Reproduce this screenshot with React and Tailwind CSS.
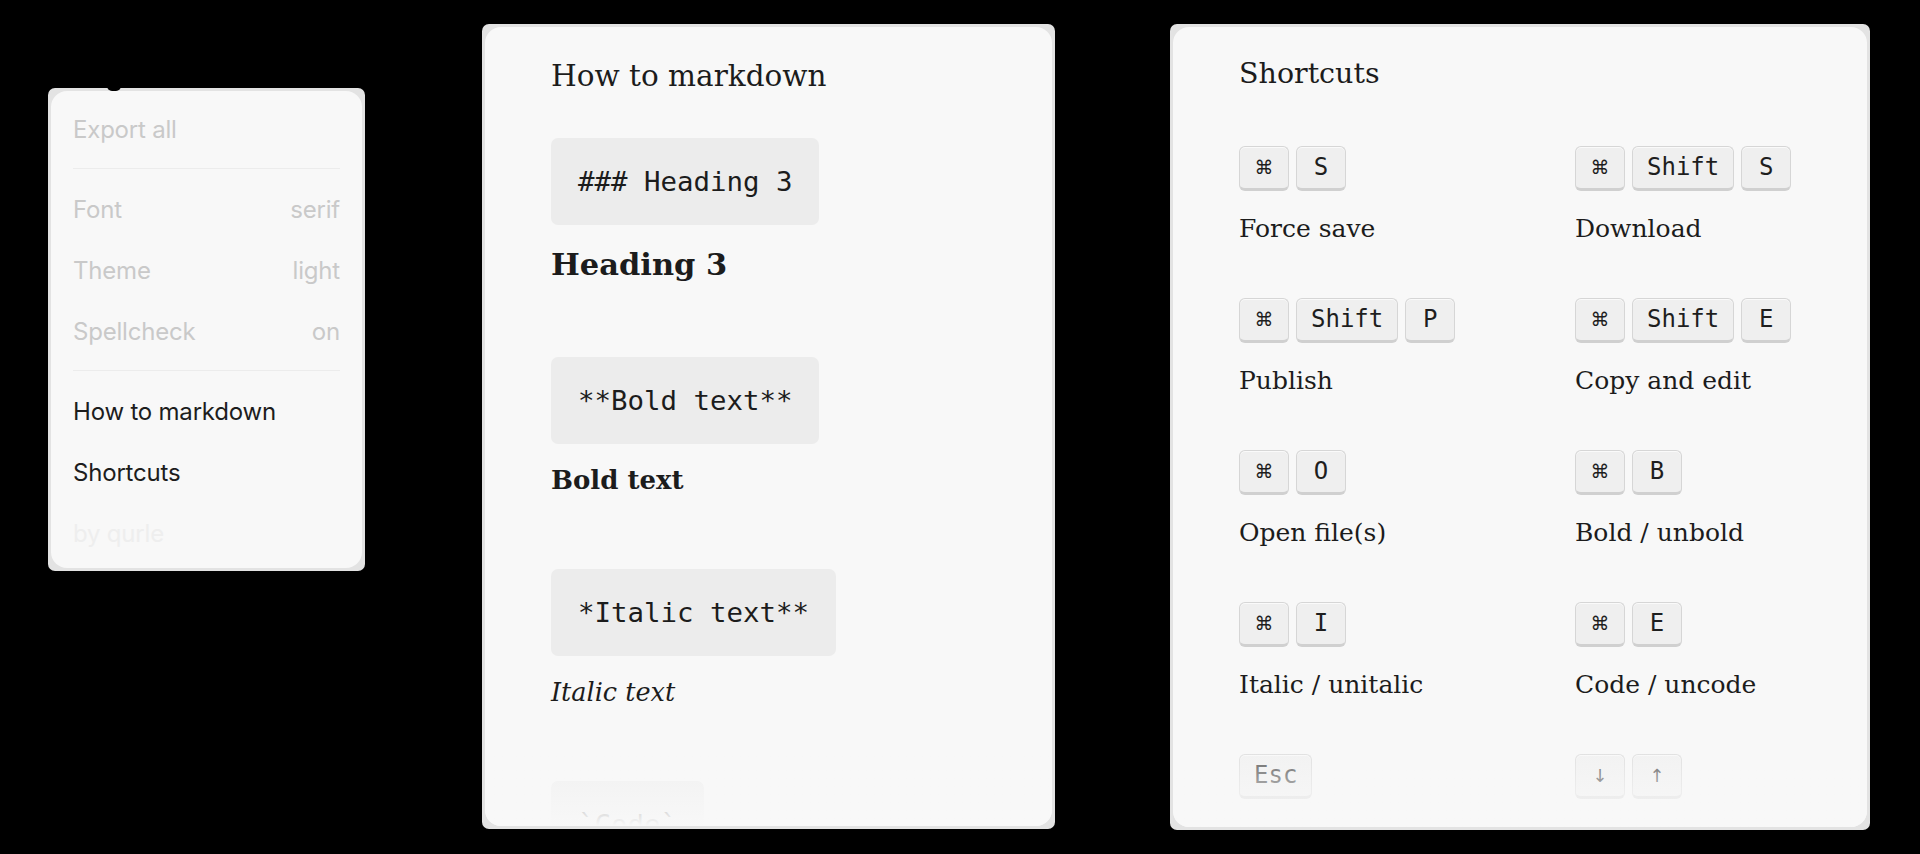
import React from 'react'

const serif = "font-['DejaVu_Serif',serif]"
const mono = "font-['DejaVu_Sans_Mono',monospace]"

const menuRows = [
  { label: 'Font', value: 'serif' },
  { label: 'Theme', value: 'light' },
  { label: 'Spellcheck', value: 'on' },
]

const examples = [
  { code: '**Bold text**', text: 'Bold text', className: 'font-bold text-[26px]' },
  { code: '*Italic text**', text: 'Italic text', className: 'italic text-[25.5px]' },
]

const shortcuts = [
  { keys: ['⌘', 'S'], label: 'Force save' },
  { keys: ['⌘', 'Shift', 'S'], label: 'Download' },
  { keys: ['⌘', 'Shift', 'P'], label: 'Publish' },
  { keys: ['⌘', 'Shift', 'E'], label: 'Copy and edit' },
  { keys: ['⌘', 'O'], label: 'Open file(s)' },
  { keys: ['⌘', 'B'], label: 'Bold / unbold' },
  { keys: ['⌘', 'I'], label: 'Italic / unitalic' },
  { keys: ['⌘', 'E'], label: 'Code / uncode' },
  { keys: ['Esc'] },
  { keys: ['↓', '↑'] },
]

function Panel({ className, children }) {
  return (
    <div className={`shrink-0 rounded-[7px] bg-[#e3e3e3] p-[3px] ${className}`}>
      <div className="relative h-full overflow-hidden rounded-[16px] bg-[#f8f8f8]">{children}</div>
    </div>
  )
}

function Fade() {
  return (
    <div className="pointer-events-none absolute inset-x-0 bottom-0 h-[110px] bg-linear-to-b from-[#f8f8f800] to-[#f8f8f8]" />
  )
}

function Key({ children }) {
  let glyph = `${mono} text-[24px]`
  if (children === '⌘') glyph = "font-['DejaVu_Sans',sans-serif] text-[19px]"
  if (children === '↓' || children === '↑') glyph = "font-['DejaVu_Sans',sans-serif] text-[18px]"
  return (
    <span
      className={`inline-flex h-[45px] min-w-[50px] items-center justify-center rounded-[6px] border border-b-[3px] border-[#d6d6d6] border-b-[#d0d0d0] bg-[#efefef] px-[14px] pb-[1px] text-[#1e1e1e] shadow-[inset_0_1px_0_#fafafa] ${glyph}`}
    >
      {children}
    </span>
  )
}

function CodeBlock({ children }) {
  return (
    <div
      className={`inline-block rounded-[7px] bg-[#ececec] p-[27px] text-[27.4px] leading-[33px] whitespace-pre text-[#1c1c1c] ${mono}`}
    >
      {children}
    </div>
  )
}

function Menu() {
  return (
    <Panel className="relative mt-[88px] h-[483px] w-[317px]">
      <div className="px-[22px] pt-[8px] font-['Inter',sans-serif] text-[24px] tracking-[-0.2px]">
        <div className="flex h-[61px] items-center text-[#c9c9c9]">Export all</div>
        <div className="mt-[8px] mb-[10px] h-px bg-[#ececec]" />
        {menuRows.map((row) => (
          <div key={row.label} className="flex h-[61px] items-center justify-between text-[#c9c9c9]">
            <span>{row.label}</span>
            <span>{row.value}</span>
          </div>
        ))}
        <div className="mt-[8px] mb-[10px] h-px bg-[#ececec]" />
        <div className="flex h-[61px] items-center text-[#1d1d1d]">How to markdown</div>
        <div className="flex h-[61px] items-center text-[#1d1d1d]">Shortcuts</div>
        <div className="flex h-[61px] items-center text-[#eeeeee]">by qurle</div>
      </div>
    </Panel>
  )
}

function Markdown() {
  return (
    <Panel className="mt-[24px] ml-[117px] h-[805px] w-[573px]">
      <div className={`pl-[66px] pt-[29px] text-[#1c1c1c] ${serif}`}>
        <h2 className="text-[29.5px] leading-[40px]">How to markdown</h2>
        <div className="mt-[42px]">
          <CodeBlock>### Heading 3</CodeBlock>
          <h3 className="mt-[19px] mb-[73px] text-[30.5px] leading-[40px] font-bold">Heading 3</h3>
        </div>
        {examples.map((item) => (
          <div key={item.code}>
            <CodeBlock>{item.code}</CodeBlock>
            <p className={`mt-[18px] mb-[71px] leading-[36px] ${item.className}`}>{item.text}</p>
          </div>
        ))}
        <CodeBlock>`Code`</CodeBlock>
      </div>
      <Fade />
    </Panel>
  )
}

function Shortcuts() {
  return (
    <Panel className="mt-[24px] ml-[115px] h-[806px] w-[700px]">
      <div className={`pl-[66px] pt-[27px] text-[#1c1c1c] ${serif}`}>
        <h2 className="text-[28.5px] leading-[40px]">Shortcuts</h2>
        <div className="mt-[52px] grid grid-cols-[336px_1fr] gap-y-[51px]">
          {shortcuts.map((item, i) => (
            <div key={i}>
              <div className="flex gap-[7px]">
                {item.keys.map((k, j) => (
                  <Key key={j}>{k}</Key>
                ))}
              </div>
              {item.label && <p className="mt-[20px] text-[25px] leading-[36px]">{item.label}</p>}
            </div>
          ))}
        </div>
      </div>
      <Fade />
    </Panel>
  )
}

export default function App() {
  return (
    <div className="flex h-[854px] w-[1920px] items-start overflow-hidden bg-black pl-[48px]">
      <div className="relative">
        <Menu />
        <div className="absolute left-[59px] top-[86px] h-[5px] w-[14px] rounded-b-full bg-black" />
      </div>
      <Markdown />
      <Shortcuts />
    </div>
  )
}
